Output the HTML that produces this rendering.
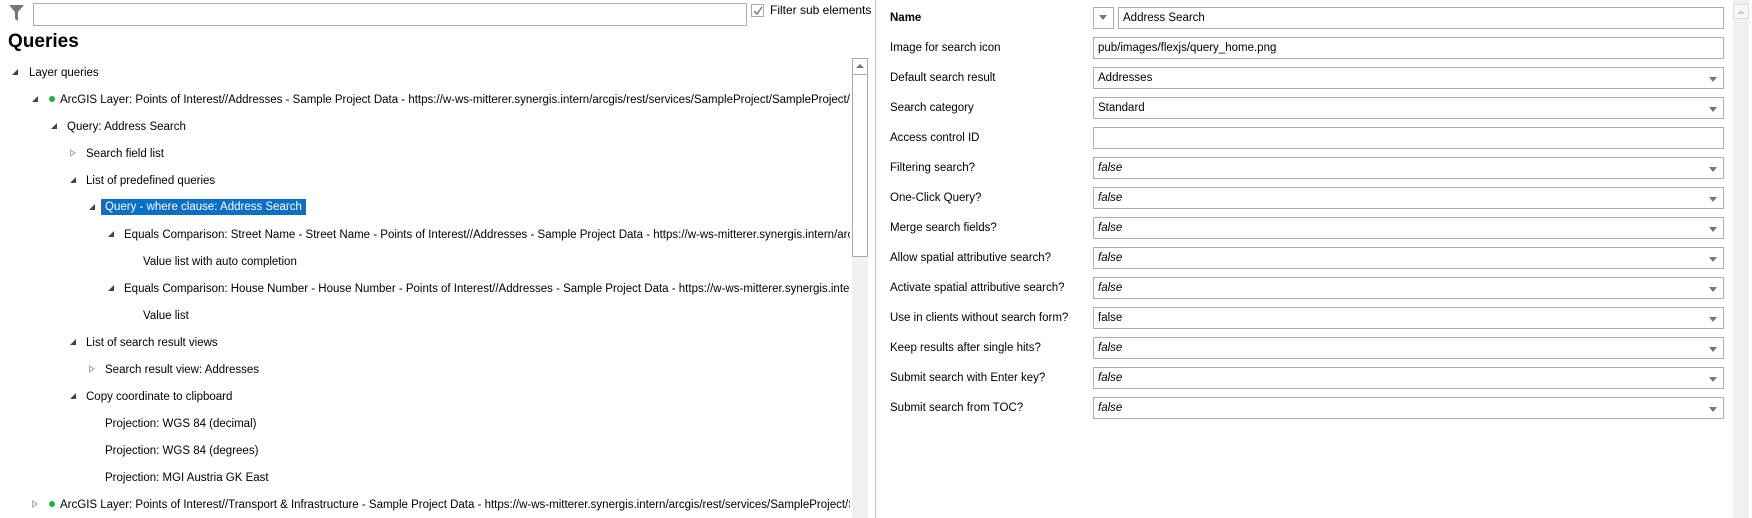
<!DOCTYPE html>
<html><head><meta charset="utf-8"><style>
*{margin:0;padding:0;box-sizing:border-box}
body{width:1752px;height:518px;overflow:hidden;background:#fff;font-family:"Liberation Sans",sans-serif;font-size:11.5px;color:#000;position:relative}
.a{position:absolute;white-space:nowrap}
.t{position:absolute;height:18px;line-height:18px;white-space:nowrap;margin-top:1px}
.tri{position:absolute;width:0;height:0}
.ex{border-left:6px solid transparent;border-bottom:6px solid #444}
.co{border-top:4px solid transparent;border-bottom:4px solid transparent;border-left:6px solid #aaa}
.co:after{content:"";position:absolute;left:-5px;top:-2px;border-top:2px solid transparent;border-bottom:2px solid transparent;border-left:3px solid #fff}
.dot{position:absolute;width:6px;height:6px;border-radius:50%;background:#1db43a}
.box{position:absolute;border:1px solid #adadad;background:#fff;height:22px;line-height:21px;padding-left:4px;font-size:11.5px}
.dd:after{content:"";position:absolute;right:6px;top:9px;border-left:4px solid transparent;border-right:4px solid transparent;border-top:5px solid #777}
.lbl{position:absolute;left:890px;height:18px;line-height:18px}
i{font-style:italic}
</style></head><body>
<svg class="a" style="left:9px;top:5px" width="15" height="16" viewBox="0 0 15 16"><path d="M0 0H15L9 7V16L6 14V7Z" fill="#777"/></svg>
<div class="a" style="left:33px;top:3px;width:714px;height:23px;border:1px solid #adadad"></div>
<div class="a" style="left:751px;top:4px;width:13px;height:13px;border:1px solid #aaa"></div>
<svg class="a" style="left:753px;top:6px" width="10" height="10"><path d="M1 5L4 8L9 1" stroke="#777" stroke-width="1.4" fill="none"/></svg>
<div class="a" style="left:770px;top:1px;line-height:18px;font-size:12px">Filter sub elements</div>
<div class="a" style="left:8px;top:30px;font-size:19px;font-weight:bold;line-height:24px">Queries</div>

<div class="a" style="left:0;top:0;width:850px;height:518px;overflow:hidden">
<div class="tri ex" style="left:12px;top:69px"></div><div class="t" style="left:29px;top:63px">Layer queries</div>
<div class="tri ex" style="left:32px;top:96px"></div><div class="dot" style="left:49px;top:96px"></div><div class="t" style="left:60px;top:90px">ArcGIS Layer: Points of Interest//Addresses - Sample Project Data - https://w-ws-mitterer.synergis.intern/arcgis/rest/services/SampleProject/SampleProject/MapServer</div>
<div class="tri ex" style="left:51px;top:123px"></div><div class="t" style="left:67px;top:117px">Query: Address Search</div>
<div class="tri co" style="left:70px;top:149px"></div><div class="t" style="left:86px;top:144px">Search field list</div>
<div class="tri ex" style="left:70px;top:177px"></div><div class="t" style="left:86px;top:171px">List of predefined queries</div>
<div class="tri ex" style="left:89px;top:204px"></div><div class="t" style="left:101px;top:198px;height:16px;line-height:16px;padding:0 4px;background:#0a6fc9;color:#fff">Query - where clause: Address Search</div>
<div class="tri ex" style="left:108px;top:231px"></div><div class="t" style="left:124px;top:225px">Equals Comparison: Street Name - Street Name - Points of Interest//Addresses - Sample Project Data - https://w-ws-mitterer.synergis.intern/arcgis/rest</div>
<div class="t" style="left:143px;top:252px">Value list with auto completion</div>
<div class="tri ex" style="left:108px;top:285px"></div><div class="t" style="left:124px;top:279px">Equals Comparison: House Number - House Number - Points of Interest//Addresses - Sample Project Data - https://w-ws-mitterer.synergis.intern/arcgis</div>
<div class="t" style="left:143px;top:306px">Value list</div>
<div class="tri ex" style="left:70px;top:339px"></div><div class="t" style="left:86px;top:333px">List of search result views</div>
<div class="tri co" style="left:89px;top:365px"></div><div class="t" style="left:105px;top:360px">Search result view: Addresses</div>
<div class="tri ex" style="left:70px;top:393px"></div><div class="t" style="left:86px;top:387px">Copy coordinate to clipboard</div>
<div class="t" style="left:105px;top:414px">Projection: WGS 84 (decimal)</div>
<div class="t" style="left:105px;top:441px">Projection: WGS 84 (degrees)</div>
<div class="t" style="left:105px;top:468px">Projection: MGI Austria GK East</div>
<div class="tri co" style="left:32px;top:500px"></div><div class="dot" style="left:49px;top:501px"></div><div class="t" style="left:60px;top:495px">ArcGIS Layer: Points of Interest//Transport &amp; Infrastructure - Sample Project Data - https://w-ws-mitterer.synergis.intern/arcgis/rest/services/SampleProject/SampleProject</div>
</div>

<div class="a" style="left:852px;top:58px;width:16px;height:460px;background:#f0f0f0"></div>
<div class="a" style="left:852px;top:58px;width:16px;height:17px;border:1px solid #ababab;background:#fff"></div>
<div class="a" style="left:856px;top:64px;border-left:4px solid transparent;border-right:4px solid transparent;border-bottom:4px solid #777"></div>
<div class="a" style="left:852px;top:74px;width:16px;height:183px;border:1px solid #ababab;background:#fff"></div>
<div class="a" style="left:875px;top:0;width:1px;height:518px;background:#bdbdbd"></div>

<div class="lbl" style="top:9px;font-weight:bold">Name</div>
<div class="box" style="left:1093px;top:7px;width:21px;padding:0"></div>
<div class="a" style="left:1099px;top:15px;border-left:4px solid transparent;border-right:4px solid transparent;border-top:5px solid #777"></div>
<div class="box" style="left:1118px;top:7px;width:606px">Address Search</div>

<div class="lbl" style="top:39px">Image for search icon</div><div class="box" style="left:1093px;top:37px;width:631px">pub/images/flexjs/query_home.png</div>
<div class="lbl" style="top:69px">Default search result</div><div class="box dd" style="left:1093px;top:67px;width:631px">Addresses</div>
<div class="lbl" style="top:99px">Search category</div><div class="box dd" style="left:1093px;top:97px;width:631px">Standard</div>
<div class="lbl" style="top:129px">Access control ID</div><div class="box" style="left:1093px;top:127px;width:631px"></div>
<div class="lbl" style="top:159px">Filtering search?</div><div class="box dd" style="left:1093px;top:157px;width:631px"><i>false</i></div>
<div class="lbl" style="top:189px">One-Click Query?</div><div class="box dd" style="left:1093px;top:187px;width:631px"><i>false</i></div>
<div class="lbl" style="top:219px">Merge search fields?</div><div class="box dd" style="left:1093px;top:217px;width:631px"><i>false</i></div>
<div class="lbl" style="top:249px">Allow spatial attributive search?</div><div class="box dd" style="left:1093px;top:247px;width:631px"><i>false</i></div>
<div class="lbl" style="top:279px">Activate spatial attributive search?</div><div class="box dd" style="left:1093px;top:277px;width:631px"><i>false</i></div>
<div class="lbl" style="top:309px">Use in clients without search form?</div><div class="box dd" style="left:1093px;top:307px;width:631px">false</div>
<div class="lbl" style="top:339px">Keep results after single hits?</div><div class="box dd" style="left:1093px;top:337px;width:631px"><i>false</i></div>
<div class="lbl" style="top:369px">Submit search with Enter key?</div><div class="box dd" style="left:1093px;top:367px;width:631px"><i>false</i></div>
<div class="lbl" style="top:399px">Submit search from TOC?</div><div class="box dd" style="left:1093px;top:397px;width:631px"><i>false</i></div>

<div class="a" style="left:1733px;top:0;width:16px;height:518px;background:#f0f0f0"></div>
<div class="a" style="left:1733px;top:4px;width:16px;height:15px;border:1px solid #ddd;background:#f7f7f7"></div>
<div class="a" style="left:1737px;top:10px;border-left:4px solid transparent;border-right:4px solid transparent;border-bottom:4px solid #ccc"></div>
</body></html>
